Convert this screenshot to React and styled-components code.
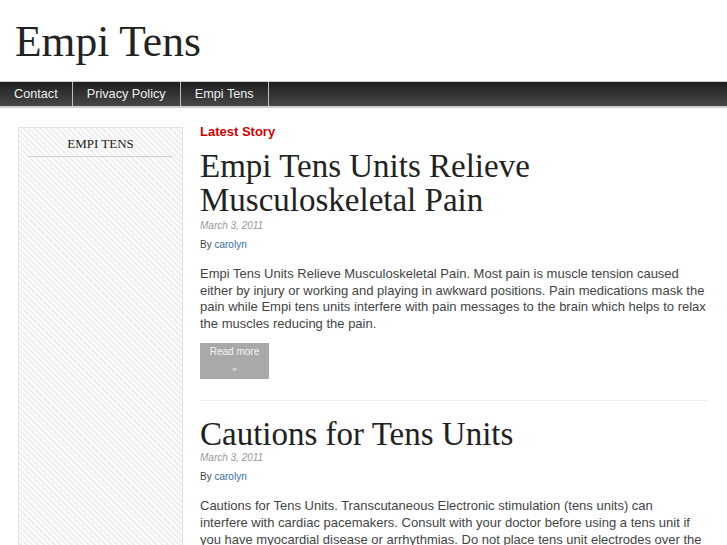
import React from "react";
import styled, { createGlobalStyle } from "styled-components";

const Global = createGlobalStyle`
  html, body { margin: 0; padding: 0; background: #fff; }
  body { font-family: "Liberation Sans", Arial, sans-serif; color: #333; overflow: hidden; }
  a { text-decoration: none; }
`;

const Page = styled.div`
  width: 727px;
  height: 545px;
  overflow: hidden;
`;

const Header = styled.header`
  height: 81px;
  padding: 0 15px;
  box-sizing: border-box;
  display: flex;
  align-items: flex-start;
`;

const SiteTitle = styled.h1`
  margin: 15px 0 0;
  font-family: "Liberation Serif", "Times New Roman", serif;
  font-weight: normal;
  font-size: 43.5px;
  line-height: 52px;
  color: #222;
`;

const NavBar = styled.nav`
  height: 24px;
  border-top: 1px solid #cfcfcf;
  border-bottom: 2px solid #cfcfcf;
  background: linear-gradient(#1f1f1f, #474747);
  display: flex;
`;

const NavItem = styled.a`
  display: flex;
  align-items: center;
  padding: 0 ${(p) => p.$pad}px;
  color: #eee;
  font-size: 12.7px;
  border-right: 1px solid #bdbdbd;
`;

const Body = styled.div`
  display: flex;
  gap: 17px;
  padding: 19px 0 0 18px;
  align-items: flex-start;
`;

const Sidebar = styled.aside`
  width: 145px;
  height: 600px;
  flex: none;
  border: 1px solid #e2e2e2;
  background-color: #f5f5f5;
  background-image: repeating-linear-gradient(
    45deg,
    #fcfcfc 0px,
    #fcfcfc 2px,
    #f0f0f0 2px,
    #f0f0f0 4px
  );
  padding: 0 9px;
`;

const WidgetTitle = styled.h3`
  margin: 0;
  padding: 8px 0 4px;
  text-align: center;
  font-family: "Liberation Serif", "Times New Roman", serif;
  font-weight: normal;
  font-size: 13px;
  color: #222;
  border-bottom: 1px solid #cfcfcf;
`;

const Main = styled.main`
  width: 508px;
  flex: none;
`;

const Label = styled.div`
  color: #d00000;
  font-weight: bold;
  font-size: 13px;
  line-height: 16px;
  margin-top: -3px;
`;

const Post = styled.article`
  padding-bottom: ${(p) => (p.$sep ? "21px" : "0")};
  border-bottom: ${(p) => (p.$sep ? "1px solid #eee" : "none")};
  margin-bottom: ${(p) => (p.$sep ? "16px" : "0")};
`;

const PostTitle = styled.h2`
  margin: 0;
  font-family: "Liberation Serif", "Times New Roman", serif;
  font-weight: normal;
  font-size: 33px;
  line-height: 34px;
  color: #222;
  padding-top: ${(p) => p.$top}px;
`;

const DateLine = styled.div`
  font-style: italic;
  font-size: 10px;
  color: #999;
  line-height: 14px;
  margin-top: ${(p) => p.$mt}px;
`;

const ByLine = styled.div`
  font-size: 10px;
  color: #444;
  line-height: 14px;
  margin-top: 5px;
  a { color: #3b6fa0; }
`;

const Text = styled.p`
  margin: 14px 0 0;
  font-size: 13px;
  line-height: 16.6px;
  color: #444;
`;

const ReadMore = styled.a`
  display: flex;
  flex-direction: column;
  align-items: center;
  width: 69px;
  height: 36px;
  margin-top: 11px;
  background: #a9a9a9;
  color: #f4f4f4;
  font-size: 10px;
  line-height: 14px;
  padding-top: 2px;
  box-sizing: border-box;
  span { font-size: 8px; line-height: 22px; }
`;

export default function App() {
  return (
    <Page>
      <Global />
      <Header>
        <SiteTitle>Empi Tens</SiteTitle>
      </Header>
      <NavBar>
        <NavItem $pad={14}>Contact</NavItem>
        <NavItem $pad={14}>Privacy Policy</NavItem>
        <NavItem $pad={14}>Empi Tens</NavItem>
      </NavBar>
      <Body>
        <Sidebar>
          <WidgetTitle>EMPI TENS</WidgetTitle>
        </Sidebar>
        <Main>
          <Label>Latest Story</Label>
          <Post $sep>
            <PostTitle $top={9}>
              Empi Tens Units Relieve Musculoskeletal Pain
            </PostTitle>
            <DateLine $mt={2}>March 3, 2011</DateLine>
            <ByLine>
              By <a href="#">carolyn</a>
            </ByLine>
            <Text>
              Empi Tens Units Relieve Musculoskeletal Pain. Most pain is muscle
              tension caused either by injury or working and playing in awkward
              positions. Pain medications mask the pain while Empi tens units
              interfere with pain messages to the brain which helps to relax the
              muscles reducing the pain.
            </Text>
            <ReadMore href="#">
              Read more
              <span>»</span>
            </ReadMore>
          </Post>
          <Post>
            <PostTitle $top={0}>Cautions for Tens Units</PostTitle>
            <DateLine $mt={0}>March 3, 2011</DateLine>
            <ByLine>
              By <a href="#">carolyn</a>
            </ByLine>
            <Text>
              Cautions for Tens Units. Transcutaneous Electronic stimulation
              (tens units) can
              <br />
              interfere with cardiac pacemakers. Consult with your doctor
              before using a tens unit if you have myocardial disease or
              arrhythmias. Do not place tens unit electrodes over the front of
              the neck.
            </Text>
          </Post>
        </Main>
      </Body>
    </Page>
  );
}
